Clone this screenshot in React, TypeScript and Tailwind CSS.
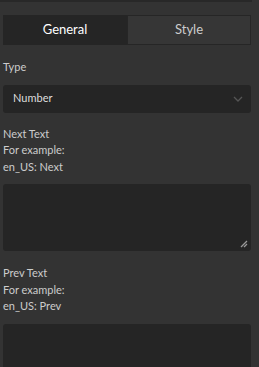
import React from "react";

export default function App() {
  const label = "text-[11px] leading-[16.5px] text-[#cccccc]";
  return (
    <div
      className="w-[259px] h-[367px] overflow-hidden bg-[#333333]"
      style={{ fontFamily: 'Lato, "Noto Sans", sans-serif' }}
    >
      <div className="h-[2px] w-[252px] bg-[#282828]" />
      <div className="pl-[3px] pr-[8px]">
        <div className="mt-[13px] flex h-[30px]">
          <div className="flex w-[124px] items-center justify-center bg-[#252525] text-[13px] text-white">
            General
          </div>
          <div className="flex flex-1 items-center justify-center border border-[#262626] bg-[#363636] text-[13px] text-[#cccccc]">
            Style
          </div>
        </div>

        <div className={`mt-[14px] ${label}`}>Type</div>
        <div className="mt-[9px] flex h-[28px] items-center justify-between rounded-[3px] bg-[#252525] pl-[10px] pr-[8px]">
          <span className="text-[11px] text-[#dddddd]">Number</span>
          <svg width="10" height="6" viewBox="0 0 10 6" fill="none">
            <path d="M1 1 L5 5 L9 1" stroke="#555555" strokeWidth="1.3" />
          </svg>
        </div>

        <div className={`mt-[13px] ${label}`}>
          <div>Next Text</div>
          <div>For example:</div>
          <div>en_US: Next</div>
        </div>
        <div className="relative mt-[9px] h-[67px] rounded-[3px] bg-[#252525]">
          <svg className="absolute bottom-[3px] right-[3px]" width="8" height="8" viewBox="0 0 8 8">
            <path d="M7 1 L1 7 M7 4 L4 7" stroke="#999999" strokeWidth="1.3" />
          </svg>
        </div>

        <div className={`mt-[14px] ${label}`}>
          <div>Prev Text</div>
          <div>For example:</div>
          <div>en_US: Prev</div>
        </div>
        <div className="relative mt-[9px] h-[67px] rounded-[3px] bg-[#252525]" />
      </div>
    </div>
  );
}
